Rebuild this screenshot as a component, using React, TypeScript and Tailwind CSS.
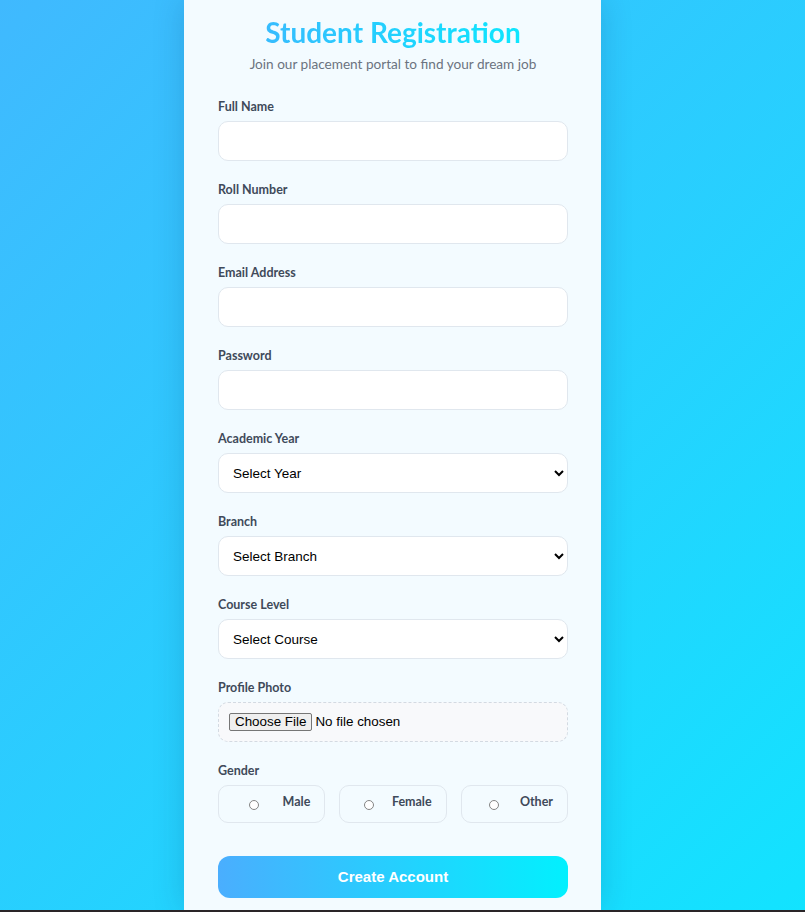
import React from "react";

const textFields = [
  { label: "Full Name", type: "text" },
  { label: "Roll Number", type: "text" },
  { label: "Email Address", type: "email" },
  { label: "Password", type: "password" },
];

const selectFields = [
  { label: "Academic Year", placeholder: "Select Year", options: ["1st Year", "2nd Year", "3rd Year", "4th Year"] },
  { label: "Branch", placeholder: "Select Branch", options: ["CSE", "ECE", "EEE", "MECH", "CIVIL"] },
  { label: "Course Level", placeholder: "Select Course", options: ["B.Tech", "M.Tech", "MBA", "MCA"] },
];

const genders = ["Male", "Female", "Other"];

function Label({ children }: { children: React.ReactNode }) {
  return (
    <label className="block text-[12.5px] leading-[16px] font-bold text-[#3f4a5a] mb-[6px]">
      {children}
    </label>
  );
}

export default function App() {
  return (
    <div className="relative h-[912px] overflow-hidden bg-[linear-gradient(135deg,#40b9fe_0%,#12e3ff_100%)] pr-[20px] font-['Lato','Open_Sans',sans-serif]">
      <div className="mx-auto w-[417px] h-[910px] bg-[#f3fbff] shadow-[0_0_30px_rgba(0,40,90,0.18)] pl-[34px] pr-[33px] pt-[14px]">
        {/* Header */}
        <h1 className="text-center text-[28px] leading-[36px] font-bold bg-[linear-gradient(90deg,#3fb4fe,#05eefe)] bg-clip-text text-transparent">
          Student Registration
        </h1>
        <p className="text-center text-[13.6px] leading-[20px] text-[#6b7380] mt-[4px] mb-[25px]">
          Join our placement portal to find your dream job
        </p>

        {textFields.map((f) => (
          <div key={f.label} className="mb-[21px]">
            <Label>{f.label}</Label>
            <input
              type={f.type}
              className="block w-full h-[40px] rounded-[10px] border border-[#e0e7ee] bg-white px-[14px] text-[14px] outline-none"
            />
          </div>
        ))}

        {selectFields.map((f) => (
          <div key={f.label} className="mb-[21px]">
            <Label>{f.label}</Label>
            <select
              defaultValue=""
              className="block w-full h-[40px] rounded-[10px] border border-[#e0e7ee] bg-white pl-[10px] pr-[10px] text-[13.5px] text-black font-['Liberation_Sans',Arial,sans-serif] outline-none"
            >
              <option value="">{f.placeholder}</option>
              {f.options.map((o) => (
                <option key={o}>{o}</option>
              ))}
            </select>
          </div>
        ))}

        {/* Profile photo */}
        <div className="mb-[21px]">
          <Label>Profile Photo</Label>
          <div className="flex items-center h-[40px] rounded-[10px] border border-dashed border-[#d3dae2] bg-[#f8f9fb] px-[10px]">
            <input
              type="file"
              className="text-[13.4px] text-black font-['Liberation_Sans',Arial,sans-serif] file:mr-[3px] file:border file:border-[#767676] file:bg-[#efefef] file:rounded-[2px] file:px-[5px] file:py-[0px] file:text-[13.4px] file:leading-[16px] file:text-black"
            />
          </div>
        </div>

        {/* Gender */}
        <div>
          <Label>Gender</Label>
          <div className="grid grid-cols-3 gap-[14px]">
            {genders.map((g) => (
              <label
                key={g}
                className="flex items-center h-[38px] rounded-[10px] border border-[#e0e7ee] px-[14px]"
              >
                <span className="flex-1 flex justify-center pt-[2px]">
                  <input
                    type="radio"
                    name="gender"
                    className="appearance-none w-[10px] h-[10px] rounded-full border border-[#858585] bg-white"
                  />
                </span>
                <span className="ml-[8px] text-[12.5px] font-bold text-[#3f4a5a] -mt-[3px]">{g}</span>
              </label>
            ))}
          </div>
        </div>

        <button className="mt-[33px] w-full h-[42px] rounded-[12px] bg-[linear-gradient(90deg,#4aaefe,#02f0fe)] text-white text-[15px] font-bold font-['Liberation_Sans',Arial,sans-serif]">
          Create Account
        </button>
      </div>
      <div className="absolute left-0 right-0 bottom-0 h-[2px] bg-[#2a2528]" />
    </div>
  );
}
